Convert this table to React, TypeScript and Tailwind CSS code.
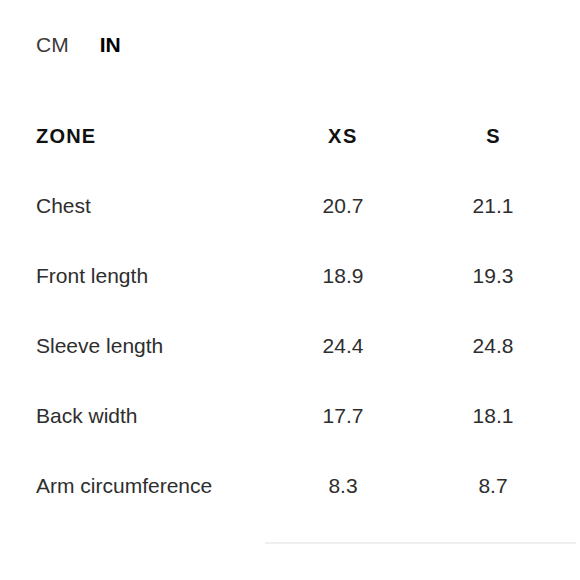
import React from "react";

const rows: [string, string, string][] = [
  ["Chest", "20.7", "21.1"],
  ["Front length", "18.9", "19.3"],
  ["Sleeve length", "24.4", "24.8"],
  ["Back width", "17.7", "18.1"],
  ["Arm circumference", "8.3", "8.7"],
];

export default function App() {
  return (
    <div
      className="w-[580px] h-[580px] bg-white overflow-hidden text-[#2e2e2e]"
      style={{ fontFamily: '"Liberation Sans", Arial, sans-serif' }}
    >
      <div className="mt-[9px] h-[70px] pl-[36px] flex items-center gap-[31px] text-[21px] leading-none">
        <span className="text-[#3a3a3a]">CM</span>
        <span className="font-bold text-black">IN</span>
      </div>
      <div className="mt-[23px] pl-[36px] grid grid-cols-[232px_150px_150px] text-[21px] leading-none">
        <div className="h-[68px] flex items-center text-[20px] font-bold text-[#111] tracking-[0.06em]">ZONE</div>
        <div className="h-[68px] flex items-center justify-center text-[20px] font-bold text-[#111] tracking-[0.08em]">XS</div>
        <div className="h-[68px] flex items-center justify-center text-[20px] font-bold text-[#111]">S</div>
        {rows.map(([zone, xs, s]) => (
          <React.Fragment key={zone}>
            <div className="h-[70px] flex items-center">{zone}</div>
            <div className="h-[70px] flex items-center justify-center">{xs}</div>
            <div className="h-[70px] flex items-center justify-center">{s}</div>
          </React.Fragment>
        ))}
      </div>
      <div className="mt-[22px] ml-[265px] w-[311px] h-[2px] bg-[#efefef]" />
    </div>
  );
}
